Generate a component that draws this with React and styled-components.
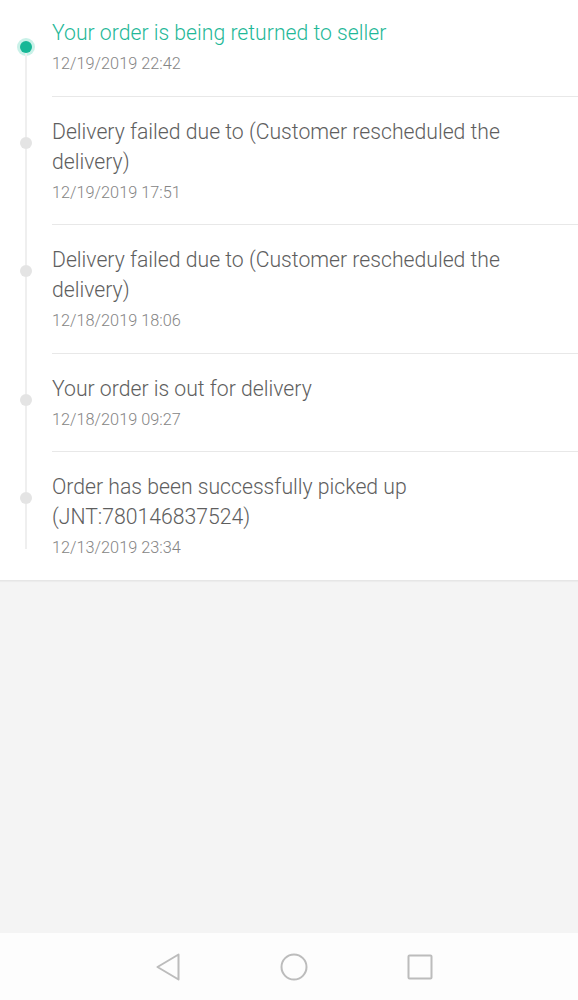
import React from 'react';
import styled, { createGlobalStyle } from 'styled-components';

const GlobalStyle = createGlobalStyle`
  html, body {
    margin: 0;
    padding: 0;
    background: #f4f4f4;
  }
  body {
    font-family: Roboto, "Noto Sans", "Liberation Sans", sans-serif;
  }
`;

const events = [
  { title: 'Your order is being returned to seller', date: '12/19/2019 22:42' },
  { title: 'Delivery failed due to (Customer rescheduled the delivery)', date: '12/19/2019 17:51' },
  { title: 'Delivery failed due to (Customer rescheduled the delivery)', date: '12/18/2019 18:06' },
  { title: 'Your order is out for delivery', date: '12/18/2019 09:27' },
  { title: 'Order has been successfully picked up (JNT:780146837524)', date: '12/13/2019 23:34' },
];

const Screen = styled.div`
  width: 578px;
  height: 1000px;
  display: flex;
  flex-direction: column;
  background: #f4f4f4;
  overflow: hidden;
`;

const Card = styled.div`
  background: #fff;
  border-bottom: 1px solid #e6e6e6;
  box-shadow: 0 1px 1px rgba(0, 0, 0, 0.03);
`;

const Row = styled.div`
  display: flex;
`;

const Rail = styled.div`
  width: 52px;
  flex-shrink: 0;
  display: flex;
  flex-direction: column;
  align-items: center;
`;

const Segment = styled.div`
  width: 2px;
  background: ${(p) => (p.$hidden ? 'transparent' : '#efefef')};
  height: ${(p) => (p.$h ? `${p.$h}px` : 'auto')};
  flex: ${(p) => (p.$h ? '0 0 auto' : '1')};
  margin-bottom: ${(p) => p.$mb || 0}px;
  margin-left: -1px;
`;

const Dot = styled.div`
  width: 12px;
  height: 12px;
  border-radius: 50%;
  flex-shrink: 0;
  background: ${(p) => (p.$active ? '#17b796' : '#e4e4e4')};
  box-shadow: ${(p) => (p.$active ? '0 0 0 3px #c9f1e8' : 'none')};
`;

const Body = styled.div`
  flex: 1;
  display: flex;
  flex-direction: column;
  gap: 6px;
  padding: ${(p) => (p.$first ? 18 : 20)}px 20px 21.5px 0;
  border-bottom: ${(p) => (p.$last ? 'none' : '1px solid #e8e8e8')};
`;

const Title = styled.div`
  font-size: 21.2px;
  line-height: 30px;
  font-weight: 300;
  color: ${(p) => (p.$active ? '#1fb898' : '#5e5e5e')};
`;

const Stamp = styled.div`
  font-size: 16.3px;
  line-height: 20px;
  font-weight: 300;
  color: #858585;
`;

const Filler = styled.div`
  flex: 1;
`;

const NavBar = styled.div`
  height: 67px;
  background: #fdfdfd;
  display: flex;
  align-items: center;
  justify-content: center;
  gap: 96px;
  padding-left: 10px;
`;

const NavIcon = styled.svg`
  width: 30px;
  height: 30px;
  stroke: #bcbcbc;
  stroke-width: 2;
  fill: none;
  stroke-linejoin: round;
`;

export default function App() {
  return (
    <Screen>
      <GlobalStyle />
      <Card>
        {events.map((e, i) => {
          const first = i === 0;
          const last = i === events.length - 1;
          return (
            <Row key={i}>
              <Rail>
                <Segment $h={first ? 41 : 40} $hidden={first} />
                <Dot $active={first} />
                <Segment $mb={last ? 31 : 0} />
              </Rail>
              <Body $first={first} $last={last}>
                <Title $active={first}>{e.title}</Title>
                <Stamp>{e.date}</Stamp>
              </Body>
            </Row>
          );
        })}
      </Card>
      <Filler />
      <NavBar>
        <NavIcon viewBox="0 0 30 30">
          <path d="M25.5 2.5 L4.5 15 L25.5 27.5 Z" />
        </NavIcon>
        <NavIcon viewBox="0 0 30 30">
          <circle cx="15" cy="15" r="12.5" />
        </NavIcon>
        <NavIcon viewBox="0 0 30 30">
          <rect x="3.5" y="3.5" width="23" height="23" rx="1" />
        </NavIcon>
      </NavBar>
    </Screen>
  );
}
